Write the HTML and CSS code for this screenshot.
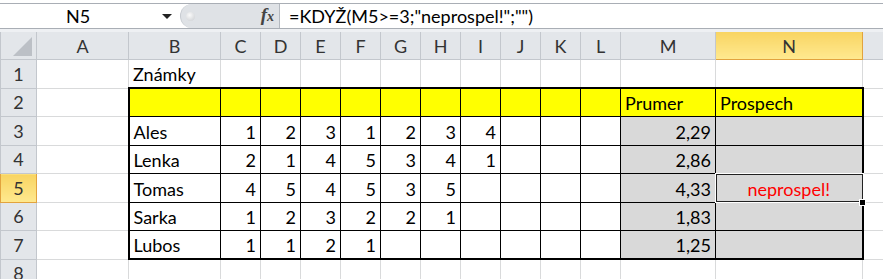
FILE: index.html
```html
<!DOCTYPE html>
<html lang="cs">
<head>
    <meta charset="UTF-8">
    <title>Známky</title>
    <link rel="stylesheet" href="styles.css">
</head>
<body>

<div class="toolbar">
    <div class="formula-bar">
        <div class="name-box">
            <span class="name-text">N5</span>
            <span class="name-arrow"></span>
        </div>
        <div class="fx-area">
            <span class="knob"></span>
            <span class="fx">f<sub>x</sub></span>
        </div>
        <div class="formula">=KDYŽ(M5&gt;=3;"neprospel!";"")</div>
    </div>
</div>
<div class="band"></div>

<table class="sheet">
    <colgroup>
        <col class="c-rh">
        <col class="c-a">
        <col class="c-b">
        <col class="c-n1"><col class="c-n1"><col class="c-n1"><col class="c-n1"><col class="c-n1">
        <col class="c-n1"><col class="c-n1"><col class="c-n1"><col class="c-n1"><col class="c-n1">
        <col class="c-m">
        <col class="c-nn">
        <col class="c-o">
    </colgroup>
    <thead>
        <tr class="hdr">
            <th class="corner"><span class="tri"></span></th>
            <th>A</th><th>B</th><th>C</th><th>D</th><th>E</th><th>F</th><th>G</th>
            <th>H</th><th>I</th><th>J</th><th>K</th><th>L</th><th>M</th>
            <th class="active">N</th><th></th>
        </tr>
    </thead>
    <tbody id="rows">
        <tr>
            <th class="rh">1</th>
            <td></td><td>Známky</td>
            <td></td><td></td><td></td><td></td><td></td><td></td><td></td><td></td><td></td><td></td>
            <td></td><td></td><td></td>
        </tr>
        <tr class="yellow">
            <th class="rh">2</th>
            <td></td>
            <td class="d top left"></td>
            <td class="d top"></td><td class="d top"></td><td class="d top"></td><td class="d top"></td><td class="d top"></td>
            <td class="d top"></td><td class="d top"></td><td class="d top"></td><td class="d top"></td><td class="d top"></td>
            <td class="d top">Prumer</td>
            <td class="d top right">Prospech</td>
            <td></td>
        </tr>
        <tr>
            <th class="rh">3</th>
            <td></td>
            <td class="d left">Ales</td>
            <td class="d n">1</td><td class="d n">2</td><td class="d n">3</td><td class="d n">1</td><td class="d n">2</td>
            <td class="d n">3</td><td class="d n">4</td><td class="d n"></td><td class="d n"></td><td class="d n"></td>
            <td class="d n g">2,29</td>
            <td class="d g right"></td>
            <td></td>
        </tr>
        <tr>
            <th class="rh">4</th>
            <td></td>
            <td class="d left">Lenka</td>
            <td class="d n">2</td><td class="d n">1</td><td class="d n">4</td><td class="d n">5</td><td class="d n">3</td>
            <td class="d n">4</td><td class="d n">1</td><td class="d n"></td><td class="d n"></td><td class="d n"></td>
            <td class="d n g">2,86</td>
            <td class="d g right"></td>
            <td></td>
        </tr>
        <tr>
            <th class="rh active">5</th>
            <td></td>
            <td class="d left">Tomas</td>
            <td class="d n">4</td><td class="d n">5</td><td class="d n">4</td><td class="d n">5</td><td class="d n">3</td>
            <td class="d n">5</td><td class="d n"></td><td class="d n"></td><td class="d n"></td><td class="d n"></td>
            <td class="d n g">4,33</td>
            <td class="d g right fail sel">neprospel!<span class="handle"></span></td>
            <td></td>
        </tr>
        <tr>
            <th class="rh">6</th>
            <td></td>
            <td class="d left">Sarka</td>
            <td class="d n">1</td><td class="d n">2</td><td class="d n">3</td><td class="d n">2</td><td class="d n">2</td>
            <td class="d n">1</td><td class="d n"></td><td class="d n"></td><td class="d n"></td><td class="d n"></td>
            <td class="d n g">1,83</td>
            <td class="d g right"></td>
            <td></td>
        </tr>
        <tr>
            <th class="rh">7</th>
            <td></td>
            <td class="d left bottom">Lubos</td>
            <td class="d n bottom">1</td><td class="d n bottom">1</td><td class="d n bottom">2</td><td class="d n bottom">1</td><td class="d n bottom"></td>
            <td class="d n bottom"></td><td class="d n bottom"></td><td class="d n bottom"></td><td class="d n bottom"></td><td class="d n bottom"></td>
            <td class="d n g bottom">1,25</td>
            <td class="d g right bottom"></td>
            <td></td>
        </tr>
        <tr>
            <th class="rh">8</th>
            <td></td><td></td>
            <td></td><td></td><td></td><td></td><td></td><td></td><td></td><td></td><td></td><td></td>
            <td></td><td></td><td></td>
        </tr>
    </tbody>
</table>

</body>
</html>
```

FILE: styles.css
```css
body {
    margin: 0;
    overflow: hidden;
    background: #fff;
    font-family: Lato, "Liberation Sans", sans-serif;
    font-size: 18px;
    color: #000;
}
.toolbar {
    padding-top: 3px;
    background: #fff;
}
.formula-bar {
    display: flex;
    height: 24px;
    border-top: 1px solid #a9aeb5;
    border-bottom: 1px solid #a9aeb5;
}
.name-box {
    width: 178px;
    display: flex;
    align-items: center;
    background: #fff;
}
.name-text {
    width: 156px;
    text-align: center;
    line-height: 24px;
}
.name-arrow {
    margin-left: 6px;
    width: 0;
    height: 0;
    border-left: 5px solid transparent;
    border-right: 5px solid transparent;
    border-top: 5px solid #222;
}
.fx-area {
    width: 100px;
    margin-left: 2px;
    background: #dfe2e6;
    border-radius: 13px 0 0 13px;
    border-left: 1px solid #c6cad0;
    border-right: 1px solid #b4b9c0;
    display: flex;
    align-items: center;
    justify-content: space-between;
    padding: 0 5px 0 5px;
    box-sizing: border-box;
}
.knob {
    width: 9px;
    height: 9px;
    border-radius: 50%;
    background: radial-gradient(circle at 40% 35%, #fafafa, #c9ccd0);
}
.fx {
    font-family: "Liberation Serif", serif;
    font-style: italic;
    font-weight: bold;
    font-size: 19px;
    color: #444;
    line-height: 20px;
}
.fx sub {
    font-size: 14px;
    vertical-align: baseline;
    margin-left: 0;
}
.formula {
    flex: 1;
    padding-left: 9px;
    line-height: 24px;
    background: #fff;
}
.band {
    height: 3px;
    background: #eef0f3;
}

.sheet {
    border-collapse: collapse;
    table-layout: fixed;
    width: 922px;
}
.c-rh { width: 36px; }
.c-a, .c-b { width: 92px; }
.c-n1 { width: 40px; }
.c-m { width: 95px; }
.c-nn { width: 147px; }
.c-o { width: 60px; }

.sheet th {
    background: #e3e6ea;
    border: 1px solid #c3c7cd;
    color: #333;
    font-weight: normal;
    padding: 0;
    text-align: center;
    vertical-align: middle;
}
.hdr th {
    height: 27px;
    border-top: none;
}
.sheet th.active {
    background: linear-gradient(#f8d462, #ffe98f);
    border-color: #e2a33e;
}
.corner {
    position: relative;
}
.tri {
    position: absolute;
    right: 4px;
    bottom: 3px;
    width: 0;
    height: 0;
    border-left: 19px solid transparent;
    border-bottom: 19px solid #bcc0c6;
}
.sheet tbody tr {
    height: 28.5px;
}
.sheet td {
    border: 1px solid #d9dadb;
    padding: 0 4px 3px;
    line-height: 20px;
    vertical-align: bottom;
    white-space: nowrap;
    overflow: visible;
}
.sheet td.d {
    border: 1px solid #000;
}
.sheet td.n {
    text-align: right;
}
.sheet td.g {
    background: #d9d9d9;
}
.yellow td.d {
    background: #ffff00;
}
.sheet td.top { border-top: 2px solid #000; }
.sheet td.bottom { border-bottom: 2px solid #000; }
.sheet td.left { border-left: 2px solid #000; }
.sheet td.right { border-right: 2px solid #000; }
.sheet td.fail {
    color: #ff0000;
    text-align: center;
}
.sel {
    position: relative;
}
.sel::after {
    content: "";
    position: absolute;
    left: -1px;
    top: -1px;
    right: -2px;
    bottom: -1px;
    border: 1px solid #fff;
    box-shadow: inset 0 0 0 1px #222;
}
.handle {
    position: absolute;
    right: -4px;
    bottom: -4px;
    width: 5px;
    height: 5px;
    background: #000;
    border: 1px solid #fff;
    z-index: 2;
}
```
